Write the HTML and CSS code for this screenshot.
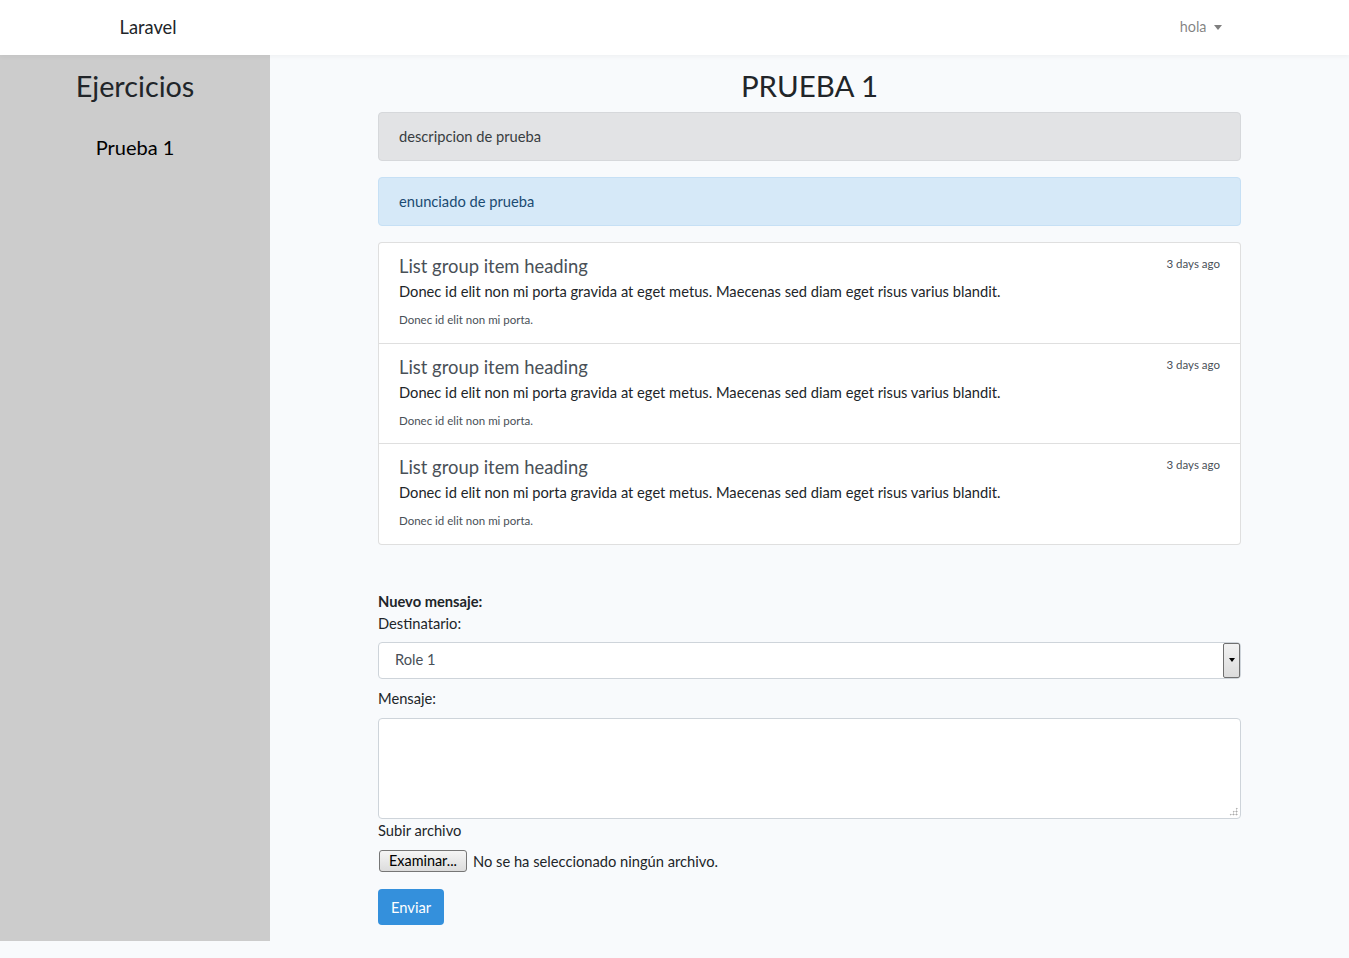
FILE: index.html
```html
<!DOCTYPE html>
<html lang="es">
<head>
<meta charset="utf-8">
<title>Laravel</title>
<link rel="stylesheet" href="styles.css">
</head>
<body>
<nav class="navbar">
  <div class="nav-inner">
    <a class="brand">Laravel</a>
    <a class="user">hola <span class="caret"></span></a>
  </div>
</nav>
<div class="page">
  <aside class="sidebar">
    <h2 class="side-title">Ejercicios</h2>
    <a class="side-link">Prueba 1</a>
  </aside>
  <main class="main">
    <div class="content">
      <h2 class="title">PRUEBA 1</h2>
      <div class="alert alert-secondary">descripcion de prueba</div>
      <div class="alert alert-primary">enunciado de prueba</div>
      <div class="list-group">
        <div class="item">
          <div class="item-head"><h5>List group item heading</h5><small>3 days ago</small></div>
          <p>Donec id elit non mi porta gravida at eget metus. Maecenas sed diam eget risus varius blandit.</p>
          <small class="note">Donec id elit non mi porta.</small>
        </div>
        <div class="item">
          <div class="item-head"><h5>List group item heading</h5><small>3 days ago</small></div>
          <p>Donec id elit non mi porta gravida at eget metus. Maecenas sed diam eget risus varius blandit.</p>
          <small class="note">Donec id elit non mi porta.</small>
        </div>
        <div class="item">
          <div class="item-head"><h5>List group item heading</h5><small>3 days ago</small></div>
          <p>Donec id elit non mi porta gravida at eget metus. Maecenas sed diam eget risus varius blandit.</p>
          <small class="note">Donec id elit non mi porta.</small>
        </div>
      </div>
      <form class="form">
        <div class="form-title">Nuevo mensaje:</div>
        <div class="label">Destinatario:</div>
        <div class="select"><span class="select-value">Role 1</span><span class="select-btn"><span class="arrow"></span></span></div>
        <div class="label label-msg">Mensaje:</div>
        <div class="textarea"><span class="grip"></span></div>
        <div class="label label-file">Subir archivo</div>
        <div class="file"><span class="file-btn">Examinar...</span><span class="file-text">No se ha seleccionado ningún archivo.</span></div>
        <div class="btn">Enviar</div>
      </form>
    </div>
  </main>
</div>
</body>
</html>
```
FILE: styles.css
```css
* { box-sizing: border-box; }
html, body { margin: 0; padding: 0; }
body {
  font-family: "Lato", "Nunito", "Noto Sans", sans-serif;
  font-size: 14.7px;
  line-height: 1.57;
  color: #212529;
  background: #f8fafc;
  height: 958px;
}
.navbar {
  height: 55px;
  background: #fff;
  box-shadow: 0 2px 4px rgba(0,0,0,0.04);
  position: relative;
  z-index: 1;
}
.nav-inner {
  width: 1140px;
  margin: 0 auto;
  padding: 0 15px;
  height: 55px;
  display: flex;
  align-items: center;
  justify-content: space-between;
}
.brand { font-size: 18.3px; color: #212529; }
.user { color: rgba(0,0,0,0.5); font-size: 14.4px; padding-right: 8px; display: flex; align-items: center; }
.caret {
  display: inline-block;
  margin-left: 7px;
  border-top: 5px solid rgba(0,0,0,0.5);
  border-left: 4px solid transparent;
  border-right: 4px solid transparent;
}
.page { display: flex; }
.sidebar {
  width: 270px;
  height: 886px;
  background: #cccccc;
  text-align: center;
  padding-top: 14px;
}
.side-title { margin: 0; font-weight: 400; font-size: 28.8px; line-height: 1.2; }
.side-link { display: block; margin-top: 31px; font-size: 20px; color: #000; line-height: 1.2; }
.main { flex: 1; display: flex; justify-content: center; }
.content { width: 863px; }
.title { margin: 14px 0 8px; text-align: center; font-weight: 400; font-size: 29.5px; line-height: 1.17; }
.alert {
  border: 1px solid transparent;
  border-radius: 4px;
  padding: 12px 20px;
  margin-bottom: 16px;
  height: 49px;
}
.alert-secondary { background: #e2e3e5; border-color: #d6d8db; color: #383d41; }
.alert-primary { background: #d6e9f8; border-color: #c6e0f5; color: #1b4b72; }
.list-group {
  background: #fff;
  border: 1px solid rgba(0,0,0,0.125);
  border-radius: 4px;
}
.item {
  padding: 12px 20px 10px;
  height: 100px;
  border-top: 1px solid rgba(0,0,0,0.125);
}
.item:first-child { border-top: 0; height: 100px; }
.item:last-child { height: 101px; }
.item-head { display: flex; justify-content: space-between; align-items: flex-start; }
.item-head h5 { margin: 0 0 1px; font-weight: 400; font-size: 18.4px; line-height: 1.2; color: #495057; }
.item-head small { font-size: 11.5px; color: #495057; margin-top: 0; }
.item p { margin: 2px 0 0; color: #212529; }
.note { font-size: 11.5px; color: #495057; display: block; margin-top: 8px; }
.form { padding-top: 45px; }
.form-title { font-weight: 700; line-height: 22px; }
.label { line-height: 22px; }
.select {
  margin-top: 8px;
  height: 37px;
  background: #fff;
  border: 1px solid #ced4da;
  border-radius: 4px;
  display: flex;
  align-items: center;
  justify-content: space-between;
}
.select-value { padding-left: 16px; color: #495057; }
.select-btn {
  width: 17px;
  height: 35px;
  border: 1px solid #707070;
  border-radius: 2px;
  background: linear-gradient(#f2f2f2, #dcdcdc);
  display: flex;
  align-items: center;
  justify-content: center;
}
.arrow { border-top: 4px solid #000; border-left: 3.5px solid transparent; border-right: 3.5px solid transparent; }
.label-msg { margin-top: 8px; }
.textarea {
  margin-top: 9px;
  height: 101px;
  background: #fff;
  border: 1px solid #ced4da;
  border-radius: 4px;
  position: relative;
}
.grip {
  position: absolute; right: 2px; bottom: 2px; width: 9px; height: 9px;
  background: radial-gradient(circle, #aaa 0.8px, transparent 1.2px) 0 0 / 3px 3px;
  clip-path: polygon(100% 0, 100% 100%, 0 100%);
}
.label-file { line-height: 22px; }
.file { display: flex; align-items: center; margin-top: 9px; }
.file-btn {
  border: 1px solid #767676;
  border-radius: 3px;
  background: linear-gradient(#f5f5f5, #dcdcdc);
  color: #000;
  padding: 0 9px;
  height: 22px;
  line-height: 20px;
  margin-left: 1px;
  font-size: 14.4px;
}
.file-text { margin-left: 6px; }
.btn {
  display: inline-block;
  margin-top: 16px;
  background: #3490dc;
  color: #fff;
  border-radius: 4px;
  height: 36px;
  line-height: 36px;
  padding: 0 13px;
}
```
